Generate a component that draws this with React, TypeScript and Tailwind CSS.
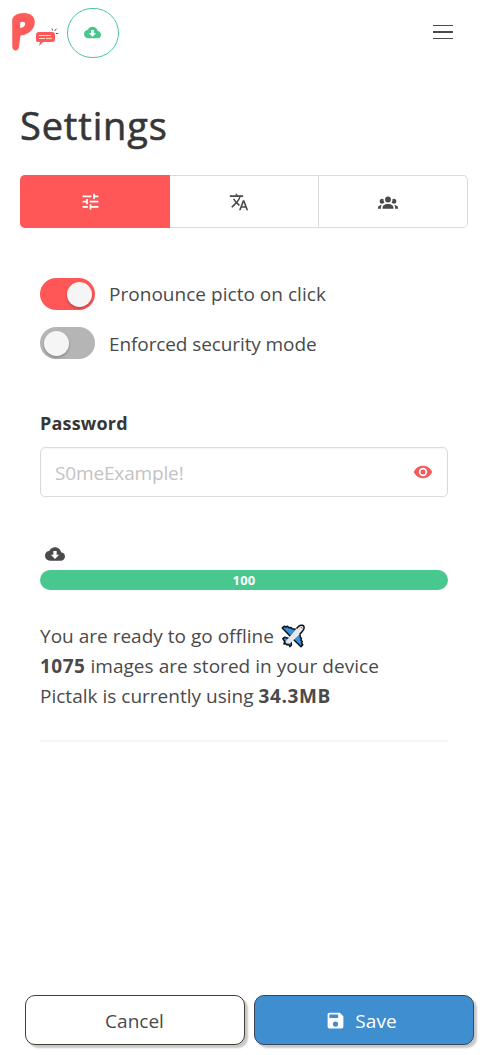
import React from "react";

const icons = {
  tune: "M3,17V19H9V17H3M3,5V7H13V5H3M13,21V19H21V17H13V15H11V21H13M7,9V11H3V13H7V15H9V9H7M21,13V11H11V13H21M15,9H17V7H21V5H17V3H15V9Z",
  translate:
    "M12.87,15.07L10.33,12.56L10.36,12.53C12.1,10.59 13.34,8.36 14.07,6H17V4H10V2H8V4H1V6H12.17C11.5,7.92 10.44,9.75 9,11.35C8.07,10.32 7.3,9.19 6.69,8H4.69C5.42,9.63 6.42,11.17 7.67,12.56L2.58,17.58L4,19L9,14L12.11,17.11L12.87,15.07M18.5,10H16.5L12,22H14L15.12,19H19.87L21,22H23L18.5,10M15.88,17L17.5,12.67L19.12,17H15.88Z",
  group:
    "M12,5.5A3.5,3.5 0 0,1 15.5,9A3.5,3.5 0 0,1 12,12.5A3.5,3.5 0 0,1 8.5,9A3.5,3.5 0 0,1 12,5.5M5,8C5.56,8 6.08,8.15 6.53,8.42C6.38,9.85 6.8,11.27 7.66,12.38C7.16,13.34 6.16,14 5,14A3,3 0 0,1 2,11A3,3 0 0,1 5,8M19,8A3,3 0 0,1 22,11A3,3 0 0,1 19,14C17.84,14 16.84,13.34 16.34,12.38C17.2,11.27 17.62,9.85 17.47,8.42C17.92,8.15 18.44,8 19,8M5.5,18.25C5.5,16.18 8.41,14.5 12,14.5C15.59,14.5 18.5,16.18 18.5,18.25V20H5.5V18.25M0,20V18.5C0,17.11 1.89,15.94 4.45,15.6C3.86,16.28 3.5,17.22 3.5,18.25V20H0M24,20H20.5V18.25C20.5,17.22 20.14,16.28 19.55,15.6C22.11,15.94 24,17.11 24,18.5V20Z",
  cloud:
    "M7,13H10V8.5H14V13H17L12,18L7,13M19.35,10.04C21.95,10.22 24,12.36 24,15A5,5 0 0,1 19,20H6A6,6 0 0,1 0,14C0,10.91 2.34,8.36 5.35,8.04C6.6,5.64 9.11,4 12,4C15.64,4 18.67,6.59 19.35,10.04Z",
  eye: "M12,9A3,3 0 0,0 9,12A3,3 0 0,0 12,15A3,3 0 0,0 15,12A3,3 0 0,0 12,9M12,17A5,5 0 0,1 7,12A5,5 0 0,1 12,7A5,5 0 0,1 17,12A5,5 0 0,1 12,17M12,4.5C7,4.5 2.73,7.61 1,12C2.73,16.39 7,19.5 12,19.5C17,19.5 21.27,16.39 23,12C21.27,7.61 17,4.5 12,4.5Z",
  save: "M15,9H5V5H15M12,19A3,3 0 0,1 9,16A3,3 0 0,1 12,13A3,3 0 0,1 15,16A3,3 0 0,1 12,19M17,3H5C3.89,3 3,3.9 3,5V19A2,2 0 0,0 5,21H19A2,2 0 0,0 21,19V7L17,3Z",
};

function Icon({ name, className }: { name: keyof typeof icons; className: string }) {
  return (
    <svg viewBox="0 0 24 24" className={`shrink-0 ${className}`} fill="currentColor" fillRule="evenodd" aria-hidden="true">
      <path d={icons[name]} />
    </svg>
  );
}

function Logo() {
  return (
    <svg viewBox="0 0 48 40" className="h-10 w-12 shrink-0" aria-hidden="true">
      <path
        d="M1.2 9C1 4 6 1 13 1C20 1 24 5 23.8 10.5C23.5 17 18 22.5 9.5 23.5L8 34.5C7.4 40 1.4 39.5 1.3 34.5Z"
        fill="#fe5b5b"
      />
      <path d="M9.3 10.5C10.5 9 14.3 9.5 14.2 12C14 14.5 10.5 16.5 9 15.5Z" fill="#fff" />
      <path d="M28 20H41C43 20 44 21 44 23V27C44 29 43 30 41 30H32L28 34L29 30H27C25 30 25 29 25 27V23C25 21 26 20 28 20Z" fill="#fe5858" />
      <path d="M28 23.5H40M28 26.5H34" stroke="#ffd9d9" strokeWidth="1.1" />
      <path d="M35 26.5H41" stroke="#ffc890" strokeWidth="1.3" />
      <path d="M41.5 18.5L41 16.5M43.5 19L45.5 16.7M45 21.5H47.2" stroke="#555" strokeWidth="1" />
    </svg>
  );
}

function Plane() {
  return (
    <svg viewBox="0 0 24 24" className="h-6 w-6 shrink-0" aria-hidden="true" stroke="#111" strokeWidth="1.5" strokeLinejoin="round">
      <path d="M1.2 4L3.2 2.2L5 3L6.5 2.3L8 3.8L10 3.4L11.2 4.8L15.5 5.5L9.5 12.5Z" fill="#3990dc" />
      <path d="M18.8 8.5L19.2 13L20.5 14.5L19.8 16L21.3 17.5L20.5 19L21.8 20.8L20 22.8L11.5 14.5Z" fill="#3990dc" />
      <path d="M1.8 14.5L3.5 13.3L8 14.5L9.8 17L10.5 21L9 22.6L7 19.5L6 21L4.5 19.5L3 20L3.7 17.5Z" fill="#3d98e6" />
      <path d="M17.5 2.4C19.8.6 23.2.8 23.1 3.7C23 6.2 20.5 8.5 18.7 10.2L9.7 18.8C7.5 20.8 3.8 19.8 5.3 16.8L13.8 6.5Z" fill="#e5e9ee" stroke="none" />
      <path d="M15.5 4.5L17.5 2.4C19.8.6 23.2.8 23.1 3.7C23 6.2 20.5 8.5 18.7 10.2" fill="none" />
      <path d="M19.8 3L21.2 4.4" stroke="#536273" strokeWidth="1" />
    </svg>
  );
}

function Toggle({ on, label }: { on?: boolean; label: React.ReactNode }) {
  return (
    <label className="flex h-8 items-center">
      <span className={on ? "flex h-8 w-[55px] items-center justify-end rounded-full bg-[#ff5757] px-[3px]" : "flex h-8 w-[55px] items-center rounded-full bg-[#b5b5b5] px-[3.5px]"}>
        <span className="h-[25px] w-[25px] rounded-full bg-[#f5f5f5] shadow-[0_2px_3px_rgba(0,0,0,0.22)]" />
      </span>
      <span className="ml-[14px] whitespace-nowrap">{label}</span>
    </label>
  );
}

export default function App() {
  return (
    <div className="flex h-[1055px] w-[488px] flex-col overflow-hidden bg-white font-['Open_Sans','Noto_Sans',sans-serif] text-[19px] leading-[30px] tracking-[0.01px] text-[#4a4a4a]">
      <header className="flex h-[65px] items-start pl-[11px] pr-[35px] pt-2">
        <div className="pt-1">
          <Logo />
        </div>
        <button className="ml-2 flex h-[50px] w-[52px] items-center justify-center rounded-full border border-[#48c78e] pb-[2px] pr-[2px] text-[#48c78e]">
          <Icon name="cloud" className="h-[17px] w-[17px]" />
        </button>
        <button aria-label="Menu" className="ml-auto mt-[17px] flex w-5 flex-col gap-[5px]">
          <span className="h-px bg-[#4a4a4a]" />
          <span className="h-[2px] bg-[#4a4a4a]" />
          <span className="h-px bg-[#4a4a4a]" />
        </button>
      </header>

      <h1 className="ml-5 mt-[38px] h-[45px] whitespace-nowrap text-[38px] font-medium leading-[45px] tracking-[0.85px] text-[#363636] [-webkit-text-stroke:0.6px_#363636]">Settings</h1>

      <nav className="mx-5 mt-[27px] flex h-[53px]">
        <button className="flex w-[150px] items-center justify-center rounded-l-[5px] bg-[#ff5757] pr-[10px] text-white">
          <Icon name="tune" className="h-[21px] w-[21px]" />
        </button>
        <button className="flex w-[149px] items-center justify-center border-y border-r border-[#dbdbdb] pr-[10px]">
          <Icon name="translate" className="h-5 w-5" />
        </button>
        <button className="flex flex-1 items-center justify-center rounded-r-[5px] border-y border-r border-[#dbdbdb] pr-[10px]">
          <Icon name="group" className="h-5 w-5" />
        </button>
      </nav>

      <main className="mx-10 flex flex-col">
        <div className="mt-[50px] flex flex-col gap-[17px]">
          <Toggle on label={<span className="tracking-[0.03px]">Pronounce picto on click</span>} />
          <Toggle label={<span className="block pt-px tracking-[-0.1px]">Enforced security mode</span>} />
        </div>
        <div className="mt-[49px] text-[18px] font-bold tracking-[0.2px] text-[#363636]">Password</div>
        <div className="mt-[9px] flex h-[50px] items-center rounded-[5px] border border-[#dbdbdb] pl-[14px] pr-[14px] shadow-[inset_0_1px_2px_rgba(10,10,10,0.05)]">
          <input className="h-full min-w-0 flex-1 bg-transparent pt-[2px] tracking-[-0.15px] outline-none placeholder:text-[#c3c3c3]" placeholder="S0meExample!" />
          <Icon name="eye" className="h-5 w-5 text-[#f35a5a]" />
        </div>
        <div className="ml-[5px] mt-[47px] h-[26px]">
          <Icon name="cloud" className="h-5 w-5" />
        </div>
        <div className="flex h-5 items-center justify-center rounded-full bg-[#48c78e] text-[13px] font-bold leading-5 tracking-[0.2px] text-white">100</div>
        <div className="mt-[31px] whitespace-nowrap">
          <p className="flex items-center">
            <span className="mr-[7px]">You are ready to go offline</span>
            <Plane />
          </p>
          <p className="tracking-[0.04px]"><strong className="tracking-[0.5px]">1075</strong> images are stored in your device</p>
          <p>Pictalk is currently using <strong className="tracking-[0.6px]">34.3MB</strong></p>
        </div>
        <div className="mt-[29px] h-[2px] bg-[#f5f5f5]" />
      </main>

      <footer className="mb-[10px] ml-[25px] mr-[14px] mt-auto flex gap-[9px]">
        <button className="h-[50px] w-[220px] rounded-[10px] border border-[#3f4032] bg-white pr-px pt-[2px] shadow-[3px_3px_2px_rgba(0,0,0,0.22)]">Cancel</button>
        <button className="flex h-[50px] w-[220px] items-center justify-center rounded-[10px] border border-[#39475a] bg-[#3e8ed0] pr-[6px] text-white shadow-[3px_3px_2px_rgba(0,0,0,0.22)]">
          <Icon name="save" className="mr-[9px] h-[21px] w-[21px]" />
          <span className="whitespace-nowrap pt-[2px] tracking-[0.1px]">Save</span>
        </button>
      </footer>
    </div>
  );
}
